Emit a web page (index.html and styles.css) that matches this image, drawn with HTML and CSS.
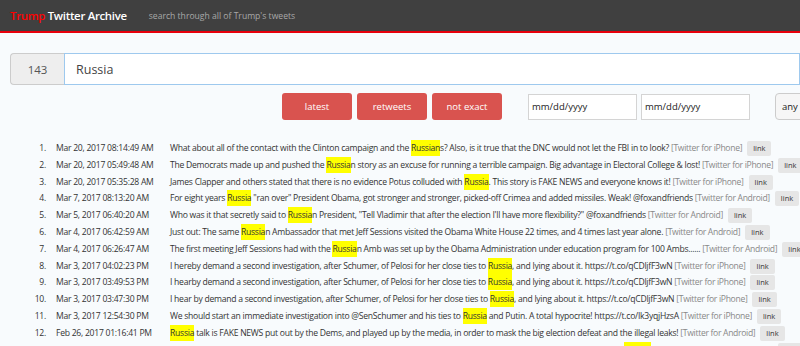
FILE: index.html
```html
<!DOCTYPE html>
<html lang="en">
  <head>
    <meta charset="UTF-8" />
    <title>Trump Twitter Archive</title>
    <link rel="stylesheet" href="styles.css">
  </head>
  <body>
    <div class="header">
      <span class="brand"><span class="red">Trump</span> Twitter Archive</span>
      <span class="tagline">search through all of Trump's tweets</span>
    </div>

    <div class="search">
      <span class="count">143</span>
      <div class="query">Russia</div>
    </div>

    <div class="controls">
      <div class="buttons">
        <button class="btn">latest</button>
        <button class="btn">retweets</button>
        <button class="btn">not exact</button>
      </div>
      <div class="dates">
        <div class="date">mm/dd/yyyy</div>
        <div class="date">mm/dd/yyyy</div>
      </div>
      <div class="select">any time</div>
    </div>

    <ol class="tweets">
      <li><span class="num">1.</span><span class="time">Mar 20, 2017 08:14:49 AM</span><span class="text">What about all of the contact with the Clinton campaign and the <mark>Russian</mark>s? Also, is it true that the DNC would not let the FBI in to look? <span class="src">[Twitter for iPhone]</span> <span class="link">link</span></span></li>
      <li><span class="num">2.</span><span class="time">Mar 20, 2017 05:49:48 AM</span><span class="text">The Democrats made up and pushed the <mark>Russia</mark>n story as an excuse for running a terrible campaign. Big advantage in Electoral College &amp; lost! <span class="src">[Twitter for iPhone]</span> <span class="link">link</span></span></li>
      <li><span class="num">3.</span><span class="time">Mar 20, 2017 05:35:28 AM</span><span class="text">James Clapper and others stated that there is no evidence Potus colluded with <mark>Russia</mark>. This story is FAKE NEWS and everyone knows it! <span class="src">[Twitter for iPhone]</span> <span class="link">link</span></span></li>
      <li><span class="num">4.</span><span class="time">Mar 7, 2017 08:13:20 AM</span><span class="text">For eight years <mark>Russia</mark> "ran over" President Obama, got stronger and stronger, picked-off Crimea and added missiles. Weak! @foxandfriends <span class="src">[Twitter for Android]</span> <span class="link">link</span></span></li>
      <li><span class="num">5.</span><span class="time">Mar 5, 2017 06:40:20 AM</span><span class="text">Who was it that secretly said to <mark>Russia</mark>n President, "Tell Vladimir that after the election I'll have more flexibility?" @foxandfriends <span class="src">[Twitter for Android]</span> <span class="link">link</span></span></li>
      <li><span class="num">6.</span><span class="time">Mar 4, 2017 06:42:59 AM</span><span class="text">Just out: The same <mark>Russia</mark>n Ambassador that met Jeff Sessions visited the Obama White House 22 times, and 4 times last year alone. <span class="src">[Twitter for Android]</span> <span class="link">link</span></span></li>
      <li><span class="num">7.</span><span class="time">Mar 4, 2017 06:26:47 AM</span><span class="text">The first meeting Jeff Sessions had with the <mark>Russia</mark>n Amb was set up by the Obama Administration under education program for 100 Ambs...... <span class="src">[Twitter for Android]</span> <span class="link">link</span></span></li>
      <li><span class="num">8.</span><span class="time">Mar 3, 2017 04:02:23 PM</span><span class="text">I hereby demand a second investigation, after Schumer, of Pelosi for her close ties to <mark>Russia</mark>, and lying about it. https://t.co/qCDljfF3wN <span class="src">[Twitter for iPhone]</span> <span class="link">link</span></span></li>
      <li><span class="num">9.</span><span class="time">Mar 3, 2017 03:49:53 PM</span><span class="text">I hearby demand a second investigation, after Schumer, of Pelosi for her close ties to <mark>Russia</mark>, and lying about it. https://t.co/qCDljfF3wN <span class="src">[Twitter for iPhone]</span> <span class="link">link</span></span></li>
      <li><span class="num">10.</span><span class="time">Mar 3, 2017 03:47:30 PM</span><span class="text">I hear by demand a second investigation, after Schumer, of Pelosi for her close ties to <mark>Russia</mark>, and lying about it. https://t.co/qCDljfF3wN <span class="src">[Twitter for iPhone]</span> <span class="link">link</span></span></li>
      <li><span class="num">11.</span><span class="time">Mar 3, 2017 12:54:30 PM</span><span class="text">We should start an immediate investigation into @SenSchumer and his ties to <mark>Russia</mark> and Putin. A total hypocrite! https://t.co/Ik3yqjHzsA <span class="src">[Twitter for iPhone]</span> <span class="link">link</span></span></li>
      <li><span class="num">12.</span><span class="time">Feb 26, 2017 01:16:41 PM</span><span class="text"><mark>Russia</mark> talk is FAKE NEWS put out by the Dems, and played up by the media, in order to mask the big election defeat and the illegal leaks! <span class="src">[Twitter for Android]</span> <span class="link">link</span></span></li>
      <li><span class="num">13.</span><span class="time">Feb 16, 2017 06:39:17 AM</span><span class="text">The Democrats had to come up with a story as to why they lost the election, and so badly (306), so they made up a story - <mark>RUSSIA</mark>. Fake news! <span class="src">[Twitter for Android]</span> <span class="link">link</span></span></li>
    </ol>
  </body>
</html>
```

FILE: styles.css
```css
body {
  margin: 0;
  font-family: "Open Sans", Arial, sans-serif;
  background-color: #f8fbfd;
  color: #333;
  height: 346px;
  overflow: hidden;
}

.header {
  height: 31px;
  background-color: #404040;
  border-bottom: 2px solid #e8000b;
  display: flex;
  align-items: center;
  padding-left: 10px;
  gap: 22px;
}

.brand {
  color: #fff;
  font-size: 11.4px;
  font-weight: 600;
  letter-spacing: -0.3px;
}

.red {
  color: #f00;
}

.tagline {
  color: #a8a8a8;
  font-size: 8.6px;
}

.search {
  display: flex;
  margin: 20px 0 0 10px;
  height: 32px;
}

.count {
  width: 53px;
  background-color: #eee;
  border: 1px solid #ccc;
  border-right: none;
  border-radius: 4px 0 0 4px;
  display: flex;
  align-items: center;
  justify-content: center;
  font-size: 11.5px;
  color: #555;
}

.query {
  flex: 1;
  background-color: #fff;
  border: 1px solid #9ec9ee;
  display: flex;
  align-items: center;
  padding-left: 11px;
  font-size: 12.5px;
  color: #444;
}

.controls {
  display: flex;
  align-items: center;
  margin-top: 8px;
  padding-left: 282px;
  height: 27px;
  overflow: hidden;
}

.buttons {
  display: flex;
  gap: 5px;
}

.btn {
  width: 70px;
  height: 27px;
  border: none;
  border-radius: 3px;
  background-color: #d9534f;
  color: #fff;
  font-family: "Open Sans", Arial, sans-serif;
  font-size: 9.5px;
  padding: 0;
}

.dates {
  display: flex;
  gap: 4px;
  margin-left: 26px;
}

.date {
  width: 104px;
  height: 24px;
  background-color: #fff;
  border: 1px solid #d4d4d4;
  display: flex;
  align-items: center;
  padding-left: 3px;
  font-size: 9.5px;
  color: #222;
}

.select {
  flex-shrink: 0;
  margin-left: 25px;
  height: 25px;
  padding: 0 10px 0 6px;
  border: 1px solid #ccc;
  border-radius: 4px;
  background-color: #f6f6f6;
  display: flex;
  align-items: center;
  font-size: 9.5px;
  color: #222;
  white-space: nowrap;
}

.tweets {
  list-style: none;
  margin: 20px 0 0;
  padding: 0;
  font-size: 8.6px;
  line-height: 16.8px;
  letter-spacing: -0.26px;
}

.tweets li {
  display: flex;
  white-space: nowrap;
}

.num {
  flex-shrink: 0;
  width: 46px;
  text-align: right;
}

.time {
  flex-shrink: 0;
  width: 114px;
  margin-left: 10px;
}

.text mark {
  background-color: #ff0;
  color: #333;
  padding: 2px 0;
}

.src {
  color: #888;
  letter-spacing: -0.32px;
}

.link {
  display: inline-block;
  background-color: #e6e6e6;
  border-radius: 2px;
  font-size: 7.5px;
  line-height: 15px;
  padding: 0 6px;
  margin-left: 3px;
  color: #333;
  letter-spacing: 0;
}
```
